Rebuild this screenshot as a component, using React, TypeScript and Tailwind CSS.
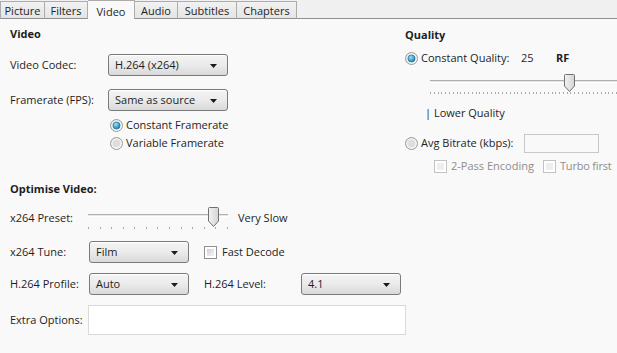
import React from 'react';

const FONT = "font-['Segoe_UI','Open_Sans','Noto_Sans',sans-serif]";

const TABS = [
  { name: 'Picture', w: 'w-[45px]' },
  { name: 'Filters', w: 'w-[43px]' },
  { name: 'Video', w: 'w-[47px]', active: true },
  { name: 'Audio', w: 'w-[43px]' },
  { name: 'Subtitles', w: 'w-[59px]' },
  { name: 'Chapters', w: 'w-[60px]' },
];

const Dropdown: React.FC<{ value: string; width: string }> = ({ value, width }) => (
  <div
    className={`${width} h-[22px] shrink-0 flex items-start justify-between pl-[6px] pr-[10px] pt-[1px] rounded-[3px] border border-[#7a7a7a] bg-gradient-to-b from-[#f4f4f4] via-[#ebebeb] to-[#d9d9d9] shadow-[inset_0_1px_0_#ffffff]`}
  >
    <span className="leading-[17px]">{value}</span>
    <svg width="7" height="4" viewBox="0 0 7 4" className="mt-[8px]">
      <path d="M0 0 H7 L3.5 4 Z" fill="#1a1a1a" />
    </svg>
  </div>
);

const Radio: React.FC<{ checked?: boolean }> = ({ checked }) => (
  <svg width="13" height="13" viewBox="0 0 13 13" className="shrink-0">
    <defs>
      <linearGradient id="rb" x1="0" y1="0" x2="1" y2="1">
        <stop offset="0" stopColor="#e8e8e8" />
        <stop offset="1" stopColor="#fafafa" />
      </linearGradient>
      <radialGradient id="rd" cx="0.4" cy="0.35" r="0.7">
        <stop offset="0" stopColor="#a6e0f6" />
        <stop offset="0.6" stopColor="#3ba3d0" />
        <stop offset="1" stopColor="#1b6d96" />
      </radialGradient>
    </defs>
    <circle cx="6.5" cy="6.5" r="6" fill="url(#rb)" stroke="#9a9a9a" />
    {checked ? (
      <circle cx="6.5" cy="6.5" r="3.6" fill="url(#rd)" stroke="#23698e" strokeWidth="0.6" />
    ) : (
      <circle cx="6.5" cy="6.5" r="3.8" fill="#dedede" />
    )}
  </svg>
);

const Checkbox: React.FC<{ disabled?: boolean }> = ({ disabled }) => (
  <div
    className={`w-[13px] h-[13px] shrink-0 border ${disabled ? 'border-[#c2c2c2]' : 'border-[#8e8f8f]'} bg-white p-[2px]`}
  >
    <div className={`w-full h-full ${disabled ? 'bg-[#eeeeee]' : 'bg-gradient-to-br from-[#cbcfd5] to-[#f6f6f6]'}`} />
  </div>
);

const Thumb: React.FC<{ h: number }> = ({ h }) => (
  <svg width="11" height={h} viewBox={`0 0 11 ${h}`}>
    <defs>
      <linearGradient id="th" x1="0" y1="0" x2="1" y2="0">
        <stop offset="0" stopColor="#f2f2f2" />
        <stop offset="1" stopColor="#d4d4d4" />
      </linearGradient>
    </defs>
    <path
      d={`M1.5 0.5 H9.5 Q10.5 0.5 10.5 1.5 V${h - 6} L5.5 ${h - 0.5} L0.5 ${h - 6} V1.5 Q0.5 0.5 1.5 0.5 Z`}
      fill="url(#th)"
      stroke="#707070"
    />
  </svg>
);

const Slider: React.FC<{
  width: string;
  ticks: number;
  thumbLeft: string;
  thumbTop: string;
  thumbH: number;
  tickTop: string;
}> = ({ width, ticks, thumbLeft, thumbTop, thumbH, tickTop }) => (
  <div className={`relative ${width} h-[24px] shrink-0`}>
    <div className="absolute left-0 right-0 top-[8px] h-[3px] border-t border-[#b0b0b0] bg-[#e6e6e6] border-b border-b-[#ffffff]" />
    <div className={`absolute left-0 right-0 ${tickTop} h-[2px] flex justify-between`}>
      {Array.from({ length: ticks }).map((_, i) => (
        <div key={i} className="w-px h-full bg-[#a8a8a8]" />
      ))}
    </div>
    <div className={`absolute ${thumbLeft} ${thumbTop}`}>
      <Thumb h={thumbH} />
    </div>
  </div>
);

export default function App() {
  return (
    <div className={`w-[617px] h-[353px] overflow-hidden bg-[#f9f9f9] text-[11px] text-[#1e1e1e] ${FONT}`}>
      {/* tab strip */}
      <div className="h-[19px] bg-[#f0f0f0] border-b border-[#8f8f8f] flex items-end">
        {TABS.map((t, i) => (
          <div
            key={t.name}
            className={`${t.w} h-[18px] -mb-px flex items-center justify-center leading-none border-t border-r border-[#acacac] ${
              i === 0 ? 'border-l' : ''
            } ${
              t.active
                ? 'h-[19px] bg-[#f9f9f9] border-b-0 border-[#8f8f8f] pt-[2px]'
                : 'bg-gradient-to-b from-[#f2f2f2] to-[#e4e4e4] border-b border-b-[#8f8f8f]'
            }`}
          >
            {t.name}
          </div>
        ))}
      </div>

      <div className="flex">
        {/* left column */}
        <div className="w-[395px] shrink-0 pl-[10px] pt-[7px]">
          <div className="h-4 leading-4 font-bold">Video</div>

          <div className="mt-[12px] h-[22px] flex items-center">
            <div className="w-[98px] shrink-0">Video Codec:</div>
            <Dropdown value="H.264 (x264)" width="w-[120px]" />
          </div>

          <div className="mt-[13px] h-[22px] flex items-center">
            <div className="w-[98px] shrink-0">Framerate (FPS):</div>
            <Dropdown value="Same as source" width="w-[120px]" />
          </div>

          <div className="mt-[5px] ml-[100px]">
            <div className="h-[18px] flex items-center gap-[3px]">
              <Radio checked />
              <span>Constant Framerate</span>
            </div>
            <div className="h-[18px] flex items-center gap-[3px]">
              <Radio />
              <span>Variable Framerate</span>
            </div>
          </div>

          <div className="mt-[29px] h-4 leading-4 font-bold">Optimise Video:</div>

          <div className="mt-[9px] h-[24px] flex items-center">
            <div className="w-[78px] shrink-0">x264 Preset:</div>
            <Slider
              width="w-[140px]"
              ticks={13}
              thumbLeft="left-[120px]"
              thumbTop="top-[1px]"
              thumbH={20}
              tickTop="top-[21px]"
            />
            <div className="ml-[10px]">Very Slow</div>
          </div>

          <div className="mt-[11px] h-[22px] flex items-center">
            <div className="w-[79px] shrink-0">x264 Tune:</div>
            <Dropdown value="Film" width="w-[100px]" />
            <div className="ml-[15px] flex items-center gap-[5px]">
              <Checkbox />
              <span>Fast Decode</span>
            </div>
          </div>

          <div className="mt-[10px] h-[22px] flex items-center">
            <div className="w-[79px] shrink-0">H.264 Profile:</div>
            <Dropdown value="Auto" width="w-[100px]" />
            <div className="ml-[15px] w-[97px] shrink-0">H.264 Level:</div>
            <Dropdown value="4.1" width="w-[100px]" />
          </div>

          <div className="mt-[10px] h-[30px] flex items-center">
            <div className="w-[78px] shrink-0">Extra Options:</div>
            <div className="w-[318px] h-[30px] shrink-0 bg-white border border-[#dadada]" />
          </div>
        </div>

        {/* right column */}
        <div className="flex-1 min-w-0 pl-[10px] pt-[8px]">
          <div className="h-4 leading-4 font-bold">Quality</div>

          <div className="mt-[6px] h-[18px] flex items-center">
            <Radio checked />
            <span className="ml-[3px] w-[100px] shrink-0">Constant Quality:</span>
            <span className="w-[35px] shrink-0">25</span>
            <span className="font-bold">RF</span>
          </div>

          <div className="mt-[5px] ml-[25px]">
            <Slider
              width="w-[260px]"
              ticks={69}
              thumbLeft="left-[134px]"
              thumbTop="top-[2px]"
              thumbH={18}
              tickTop="top-[20px]"
            />
          </div>

          <div className="mt-[9px] ml-[20px] h-4 leading-4">| Lower Quality</div>

          <div className="mt-[12px] h-[20px] flex items-center">
            <Radio />
            <span className="ml-[3px] w-[103px] shrink-0">Avg Bitrate (kbps):</span>
            <div className="w-[75px] h-[19px] shrink-0 bg-[#f9f9f9] border border-[#c8c8c8]" />
          </div>

          <div className="mt-[4px] ml-[29px] h-[18px] flex items-center text-[#8d8d8d] whitespace-nowrap">
            <Checkbox disabled />
            <span className="ml-[4px] w-[92px] shrink-0">2-Pass Encoding</span>
            <Checkbox disabled />
            <span className="ml-[4px] tracking-[-0.2px]">Turbo first</span>
          </div>
        </div>
      </div>
    </div>
  );
}
